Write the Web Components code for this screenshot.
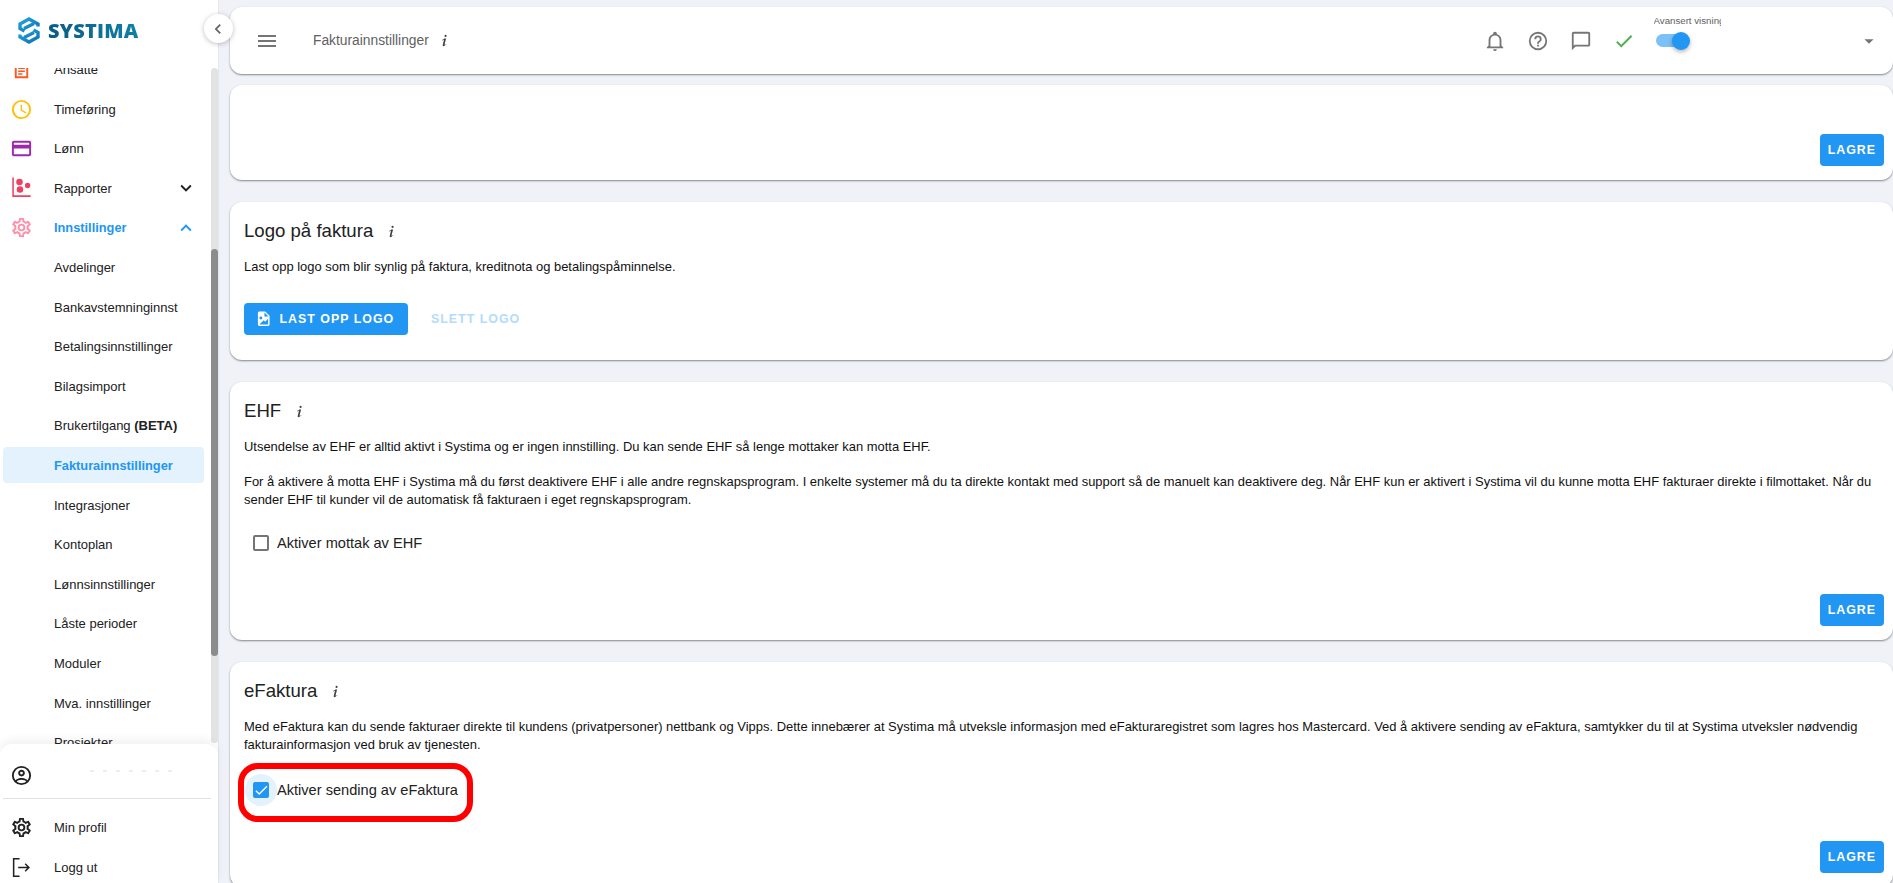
<!DOCTYPE html>
<html lang="no"><head><meta charset="utf-8"><title>Fakturainnstillinger</title>
<style>
html,body{margin:0;height:883px;overflow:hidden;background:#f0f2f8;font-family:"Liberation Sans",Arimo,sans-serif;color:#212121}
app-shell{height:883px}
</style></head><body>
<template id="t-icon"><style>:host{display:inline-flex;width:var(--s,24px);height:var(--s,24px);flex:none;color:inherit}svg{width:100%;height:100%;fill:currentColor;display:block}</style><svg viewBox="0 0 24 24"><path></path></svg></template>
<app-shell>
  <side-bar slot="side"></side-bar>
  <top-bar slot="main" heading="Fakturainnstillinger"></top-bar>
  <set-card slot="main" save style="--h:95px"></set-card>
  <set-card slot="main" heading="Logo på faktura" style="--h:158px">
    <p>Last opp logo som blir synlig på faktura, kreditnota og betalingspåminnelse.</p>
    <logo-actions style="margin-top:27px"></logo-actions>
  </set-card>
  <set-card slot="main" heading="EHF" save style="--h:258px">
    <p>Utsendelse av EHF er alltid aktivt i Systima og er ingen innstilling. Du kan sende EHF så lenge mottaker kan motta EHF.</p>
    <p style="margin-top:17px">For å aktivere å motta EHF i Systima må du først deaktivere EHF i alle andre regnskapsprogram. I enkelte systemer må du ta direkte kontakt med support så de manuelt kan deaktivere deg. Når EHF kun er aktivert i Systima vil du kunne motta EHF fakturaer direkte i filmottaket. Når du sender EHF til kunder vil de automatisk få fakturaen i eget regnskapsprogram.</p>
    <check-box label="Aktiver mottak av EHF" style="margin-top:18px"></check-box>
  </set-card>
  <set-card slot="main" heading="eFaktura" save style="--h:225px">
    <p>Med eFaktura kan du sende fakturaer direkte til kundens (privatpersoner) nettbank og Vipps. Dette innebærer at Systima må utveksle informasjon med eFakturaregistret som lagres hos Mastercard. Ved å aktivere sending av eFaktura, samtykker du til at Systima utveksler nødvendig fakturainformasjon ved bruk av tjenesten.</p>
    <check-box label="Aktiver sending av eFaktura" checked marked style="margin-top:20px"></check-box>
  </set-card>
</app-shell>
<script>
const circ=(x,y,r)=>`M${x-r},${y}a${r},${r} 0 1,0 ${2*r},0a${r},${r} 0 1,0 ${-2*r},0Z`;
const P={
menu:"M3,6H21V8H3V6M3,11H21V13H3V11M3,16H21V18H3V16Z",
info:"M13.5,4A1.5,1.5 0 0,0 12,5.5A1.5,1.5 0 0,0 13.5,7A1.5,1.5 0 0,0 15,5.5A1.5,1.5 0 0,0 13.5,4M13.14,8.77C11.95,8.87 8.7,11.46 8.7,11.46C8.5,11.61 8.56,11.6 8.72,11.88C8.88,12.15 8.86,12.17 9.05,12.04C9.25,11.91 9.58,11.7 10.13,11.36C12.25,10 10.47,13.14 9.56,18.43C9.2,21.05 11.56,19.7 12.17,19.3C12.77,18.91 14.38,17.8 14.54,17.69C14.76,17.54 14.6,17.42 14.43,17.17C14.31,17 14.19,17.12 14.19,17.12C13.54,17.55 12.35,18.45 12.19,17.88C12,17.31 13.22,13.4 13.89,10.71C14,10.07 14.3,8.67 13.14,8.77Z",
bell:"M10 21H14C14 22.1 13.1 23 12 23S10 22.1 10 21M21 19V20H3V19L5 17V11C5 7.9 7 5.2 10 4.3V4C10 2.9 10.9 2 12 2S14 2.9 14 4V4.3C17 5.2 19 7.9 19 11V17L21 19M17 11C17 8.2 14.8 6 12 6S7 8.2 7 11V18H17V11Z",
help:"M11,18H13V16H11V18M12,2A10,10 0 0,0 2,12A10,10 0 0,0 12,22A10,10 0 0,0 22,12A10,10 0 0,0 12,2M12,20C7.59,20 4,16.41 4,12C4,7.59 7.59,4 12,4C16.41,4 20,7.59 20,12C20,16.41 16.41,20 12,20M12,6A4,4 0 0,0 8,10H10A2,2 0 0,1 12,8A2,2 0 0,1 14,10C14,12 11,11.75 11,15H13C13,12.75 16,12.5 16,10A4,4 0 0,0 12,6Z",
chat:"M20,2H4A2,2 0 0,0 2,4V22L6,18H20A2,2 0 0,0 22,16V4C22,2.89 21.1,2 20,2M20,16H5.17L4,17.17V4H20V16Z",
check:"M21,7L9,19L3.5,13.5L4.91,12.09L9,16.17L19.59,5.59L21,7Z",
drop:"M7,10L12,15L17,10H7Z",
clock:"M12,20A8,8 0 0,0 20,12A8,8 0 0,0 12,4A8,8 0 0,0 4,12A8,8 0 0,0 12,20M12,2A10,10 0 0,1 22,12A10,10 0 0,1 12,22C6.47,22 2,17.5 2,12A10,10 0 0,1 12,2M12.5,7V12.25L17,14.92L16.25,16.15L11,13V7H12.5Z",
card:"M20,8H4V6H20M20,18H4V12H20M20,4H4C2.89,4 2,4.89 2,6V18A2,2 0 0,0 4,20H20A2,2 0 0,0 22,18V6C22,4.89 21.1,4 20,4Z",
chart:"M2.4,.6H4V19H21.5V20.8H2.4Z"+circ(9.9,5.3,3.4)+circ(18.4,8.9,2.8)+circ(10.4,13,3.4),
cog:"M12,8A4,4 0 0,1 16,12A4,4 0 0,1 12,16A4,4 0 0,1 8,12A4,4 0 0,1 12,8M12,10A2,2 0 0,0 10,12A2,2 0 0,0 12,14A2,2 0 0,0 14,12A2,2 0 0,0 12,10M10,22C9.75,22 9.54,21.82 9.5,21.58L9.13,18.93C8.5,18.68 7.96,18.34 7.44,17.94L4.95,18.95C4.73,19.03 4.46,18.95 4.34,18.73L2.34,15.27C2.21,15.05 2.27,14.78 2.46,14.63L4.57,12.97L4.5,12L4.57,11L2.46,9.37C2.27,9.22 2.21,8.95 2.34,8.73L4.34,5.27C4.46,5.05 4.73,4.96 4.95,5.05L7.44,6.05C7.96,5.66 8.5,5.32 9.13,5.07L9.5,2.42C9.54,2.18 9.75,2 10,2H14C14.25,2 14.46,2.18 14.5,2.42L14.87,5.07C15.5,5.32 16.04,5.66 16.56,6.05L19.05,5.05C19.27,4.96 19.54,5.05 19.66,5.27L21.66,8.73C21.79,8.95 21.73,9.22 21.54,9.37L19.43,11L19.5,12L19.43,13L21.54,14.63C21.73,14.78 21.79,15.05 21.66,15.27L19.66,18.73C19.54,18.95 19.27,19.04 19.05,18.95L16.56,17.95C16.04,18.34 15.5,18.68 14.87,18.93L14.5,21.58C14.46,21.82 14.25,22 14,22H10M11.25,4L10.88,6.61C9.68,6.86 8.62,7.5 7.85,8.39L5.44,7.35L4.69,8.65L6.8,10.2C6.4,11.37 6.4,12.64 6.8,13.8L4.68,15.36L5.43,16.66L7.86,15.62C8.63,16.5 9.68,17.14 10.87,17.38L11.24,20H12.76L13.13,17.39C14.32,17.14 15.37,16.5 16.14,15.62L18.57,16.66L19.32,15.36L17.2,13.81C17.6,12.64 17.6,11.37 17.2,10.2L19.31,8.65L18.56,7.35L16.15,8.39C15.38,7.5 14.32,6.86 13.12,6.62L12.75,4H11.25Z",
clip:"M5,3H9.2C9.6,1.8 10.7,1 12,1C13.3,1 14.4,1.8 14.8,3H19V21H5ZM7,5V19H17V5H15V7H9V5ZM8.5,10H15.5V11.6H8.5ZM8.5,13H15.5V14.6H8.5ZM8.5,16H13V17.4H8.5Z",
acct:"M12,2A10,10 0 0,0 2,12A10,10 0 0,0 12,22A10,10 0 0,0 22,12A10,10 0 0,0 12,2M7.07,18.28C7.5,17.38 10.12,16.5 12,16.5C13.88,16.5 16.5,17.38 16.93,18.28C15.57,19.36 13.86,20 12,20C10.14,20 8.43,19.36 7.07,18.28M18.36,16.83C16.93,15.09 13.46,14.5 12,14.5C10.54,14.5 7.07,15.09 5.64,16.83C4.62,15.5 4,13.82 4,12C4,7.59 7.59,4 12,4C16.41,4 20,7.59 20,12C20,13.82 19.38,15.5 18.36,16.83M12,6C10.06,6 8.5,7.56 8.5,9.5C8.5,11.44 10.06,13 12,13C13.94,13 15.5,11.44 15.5,9.5C15.5,7.56 13.94,6 12,6M12,11A1.5,1.5 0 0,1 10.5,9.5A1.5,1.5 0 0,1 12,8A1.5,1.5 0 0,1 13.5,9.5A1.5,1.5 0 0,1 12,11Z",
logout:"M3,2H10V3.6H4.6V20.4H10V22H3ZM16.4,7.6L20.8,12L16.4,16.4L15.3,15.3L17.8,12.8H8.5V11.2H17.8L15.3,8.7Z",
file:"M13,9H18.5L13,3.5V9M6,2H14L20,8V20A2,2 0 0,1 18,22H6C4.89,22 4,21.1 4,20V4C4,2.89 4.89,2 6,2M6,20H15L18,20V12L14,16L12,14L6,20M8,9A2,2 0 0,0 6,11A2,2 0 0,0 8,13A2,2 0 0,0 10,11A2,2 0 0,0 8,9Z",
down:"M7.41,8.58L12,13.17L16.59,8.58L18,10L12,16L6,10L7.41,8.58Z",
up:"M7.41,15.41L12,10.83L16.59,15.41L18,14L12,8L6,14L7.41,15.41Z",
left:"M15.41,16.58L10.83,12L15.41,7.41L14,6L8,12L14,18L15.41,16.58Z"
};
class UiIcon extends HTMLElement{
  static get observedAttributes(){return['name']}
  constructor(){super();this.attachShadow({mode:'open'}).append(document.getElementById('t-icon').content.cloneNode(true))}
  connectedCallback(){this.render()} attributeChangedCallback(){this.render()}
  render(){this.shadowRoot.querySelector('path').setAttribute('d',P[this.getAttribute('name')]||'')}
}
customElements.define('ui-icon',UiIcon);
class Base extends HTMLElement{constructor(){super();this.attachShadow({mode:'open'})}}

customElements.define('app-shell',class extends Base{connectedCallback(){this.shadowRoot.innerHTML=`<style>
:host{display:grid;grid-template-columns:218px 1fr;position:relative}
.main{display:flex;flex-direction:column;gap:11px;padding:7px 0 0 11px;height:876px;overflow:hidden;border-left:1px solid #e6e7ec}
.main ::slotted(set-card:nth-of-type(n+2)){margin-top:11px}
</style><slot name="side"></slot><div class="main"><slot name="main"></slot></div>`}});

customElements.define('side-bar',class extends Base{connectedCallback(){
const top=[['Ansatte','clip','#ff5722'],['Timeføring','clock','#ffc107'],['Lønn','card','#9c27b0'],['Rapporter','chart','#ef3e62','down'],['Innstillinger','cog','#ff8fa8','up','on']];
const sub=['Avdelinger','Bankavstemninginnst','Betalingsinnstillinger','Bilagsimport','Brukertilgang <b>(BETA)</b>','Fakturainnstillinger','Integrasjoner','Kontoplan','Lønnsinnstillinger','Låste perioder','Moduler','Mva. innstillinger','Prosjekter'];
this.shadowRoot.innerHTML=`<style>
:host{display:block;height:883px;background:#fff;position:relative;width:218px;z-index:2}
.logo{height:68px;display:flex;align-items:center;gap:8px;padding:0 0 7px 18px;box-sizing:border-box}
.logo svg{width:22px;height:27px}
.logo span{font:800 20px/1 "Open Sans",sans-serif;letter-spacing:.2px;background:linear-gradient(90deg,#0a5c86,#0f7fa6);-webkit-background-clip:text;background-clip:text;color:transparent}
.scroll{height:676px;overflow:hidden;position:relative}
.list{margin-top:-16.5px}
.row{height:36px;margin:0 14px 3.6px 3px;display:flex;align-items:center;font-size:13px;color:#212121;padding-left:12px;border-radius:4px;white-space:nowrap}
.row ui-icon{--s:23px;margin:0 21px 0 -5px}
.row .t{flex:1}
.row.sub{padding-left:51px}
.row.on,.row.sel{color:#2196f3;font-weight:700;font-size:12.8px}
.row.sel{background:#e3f2fd}
.row .ch{--s:22px;margin:0 7px 0 0;color:#212121}
.row.on .ch{color:#2196f3}
.track{position:absolute;right:0;top:68px;width:7px;height:675px;background:#e3e3e3;border-radius:4px}
.thumb{position:absolute;left:0;top:181px;width:7px;height:407px;background:#8c8c8c;border-radius:4px}
.foot{position:absolute;left:0;right:0;bottom:0;height:139px;background:#fff;border-radius:12px 12px 0 0;box-shadow:0 -4px 10px rgba(0,0,0,.06);z-index:1}
.foot .row{margin:0 3px 3.6px}
.a{height:46px;display:flex;align-items:center;padding:8px 0 0 10px;position:relative}
.a ui-icon{--s:23px}
.smudge{position:absolute;left:90px;top:26px;width:86px;height:2px;background:repeating-linear-gradient(90deg,#eee 0 4px,transparent 4px 13px)}
hr{margin:0 7px 10.7px 3px;border:0;border-top:1px solid #e0e0e0}
.btn{position:absolute;left:203.5px;top:14px;width:29px;height:29px;border-radius:50%;background:#fff;box-shadow:0 1px 5px rgba(0,0,0,.25);display:flex;align-items:center;justify-content:center;color:#616161;z-index:3}
.btn ui-icon{--s:20px}
</style>
<div class="logo"><svg viewBox="0 0 22 27" fill="none" stroke="url(#g)" stroke-width="3.4"><defs><linearGradient id="g" x1="0" y1="0" x2="1" y2="1"><stop offset="0" stop-color="#22a3e0"/><stop offset="1" stop-color="#1172b5"/></linearGradient></defs><path d="M20 9.5V7L11 2L2 7V11.5L6.5 14"/><path d="M2 17.5V20L11 25L20 20V15.5L15.5 13"/><path d="M6 11.5L16 6.5"/><path d="M6 20.5L16 15.5"/></svg><span>SYSTIMA</span></div>
<div class="scroll"><div class="list">
${top.map(r=>`<div class="row ${r[4]||''}"><ui-icon name="${r[1]}" style="color:${r[2]}"></ui-icon><span class="t">${r[0]}</span>${r[3]?`<ui-icon class="ch" name="${r[3]}"></ui-icon>`:''}</div>`).join('')}
${sub.map(s=>`<div class="row sub ${s=='Fakturainnstillinger'?'sel':''}"><span class="t">${s}</span></div>`).join('')}
</div></div>
<div class="track"><div class="thumb"></div></div>
<div class="foot"><div class="a"><ui-icon name="acct"></ui-icon><span class="smudge"></span></div><hr>
<div class="row"><ui-icon name="cog"></ui-icon><span class="t">Min profil</span></div>
<div class="row"><ui-icon name="logout"></ui-icon><span class="t">Logg ut</span></div></div>
<div class="btn"><ui-icon name="left"></ui-icon></div>`}});

customElements.define('top-bar',class extends Base{connectedCallback(){this.shadowRoot.innerHTML=`<style>
:host{display:flex;align-items:center;height:67px;flex:none;background:#fff;border-radius:12px;box-shadow:0 1px 2px rgba(0,0,0,.45);font-size:13.8px;padding-left:25px}
.menu{--s:24px;margin-right:34px;color:#757575}
.t{color:#616161;margin-right:7px}
.i{--s:17px;color:#424242}
.sp{flex:1}
.ic{--s:22px;margin-right:21px;color:#757575}
.tog{width:74px;position:relative;height:67px;margin-left:-2px}
.lab{position:absolute;left:0;top:8px;font-size:9.7px;line-height:12px;white-space:nowrap;width:67px;overflow:hidden;color:#616161}
.tr{position:absolute;left:2px;top:27px;width:30px;height:13px;border-radius:7px;background:#7cc0f8}
.kn{position:absolute;left:18px;top:25px;width:18px;height:18px;border-radius:50%;background:#2196f3;box-shadow:0 2px 4px rgba(0,0,0,.3)}
.dd{--s:22px;margin:0 13px 0 130.5px;color:#757575}
</style><ui-icon class="menu" name="menu"></ui-icon><span class="t">${this.getAttribute('heading')}</span><ui-icon class="i" name="info"></ui-icon><span class="sp"></span>
<ui-icon class="ic" name="bell"></ui-icon><ui-icon class="ic" name="help"></ui-icon><ui-icon class="ic" name="chat"></ui-icon><ui-icon class="ic" name="check" style="color:#4caf50"></ui-icon>
<div class="tog"><span class="lab">Avansert visning</span><span class="tr"></span><span class="kn"></span></div><ui-icon class="dd" name="drop"></ui-icon>`}});

customElements.define('set-card',class extends Base{connectedCallback(){const h=this.getAttribute('heading'),s=this.hasAttribute('save');this.shadowRoot.innerHTML=`<style>
:host{display:block;height:var(--h);flex:none;background:#fff;border-radius:12px;box-shadow:0 1px 2px rgba(0,0,0,.45);position:relative;box-sizing:border-box;padding:15px 9px 0 14px;font-size:12.95px;line-height:18px;color:#111}
h2{margin:0 0 13px;font-size:18.6px;line-height:28px;font-weight:400;display:flex;align-items:center;gap:10px;color:#212121}
h2 ui-icon{--s:17px;color:#424242}
::slotted(p){margin:0}
.save{position:absolute;right:9px;bottom:14px}
</style>${h?`<h2>${h}<ui-icon name="info"></ui-icon></h2>`:''}<slot></slot>${s?`<ui-btn class="save">LAGRE</ui-btn>`:''}`}});

customElements.define('ui-btn',class extends Base{connectedCallback(){this.shadowRoot.innerHTML=`<style>
:host{display:inline-flex;align-items:center;height:32px;padding:0 8px;background:#2196f3;color:#fff;border-radius:4px;font:700 12.4px "Liberation Sans",sans-serif;letter-spacing:1px;white-space:nowrap;box-sizing:border-box}
:host([flat]){background:none;color:#b3dcfb;padding:0 23px}
</style><slot></slot>`}});

customElements.define('logo-actions',class extends Base{connectedCallback(){this.shadowRoot.innerHTML=`<style>:host{display:flex}.p{padding:0 14px 0 11px;width:164px}ui-icon{--s:17.5px;margin-right:7px}</style><ui-btn class="p"><ui-icon name="file"></ui-icon>LAST OPP LOGO</ui-btn><ui-btn flat>SLETT LOGO</ui-btn>`}});

customElements.define('check-box',class extends Base{connectedCallback(){const c=this.hasAttribute('checked');this.shadowRoot.innerHTML=`<style>
:host{display:flex;align-items:center;height:32px;font-size:14.6px;color:#212121;position:relative;white-space:nowrap;margin-left:1px}
.h{width:32px;height:32px;border-radius:50%;display:flex;align-items:center;justify-content:center;background:${c?'#e3f2fd':'none'}}
.b{width:16.5px;height:16.5px;box-sizing:border-box;border-radius:2px;${c?'background:#2196f3':'border:2px solid #757575'};display:flex;color:#fff}
.b ui-icon{--s:16.5px}
.m{position:absolute;left:-7px;top:-11px;width:235px;height:59px;box-sizing:border-box;border:6px solid #f00;border-radius:20px}
</style><span class="h"><span class="b">${c?'<ui-icon name="check"></ui-icon>':''}</span></span><span>${this.getAttribute('label')}</span>${this.hasAttribute('marked')?'<span class="m"></span>':''}`}});
</script></body></html>
